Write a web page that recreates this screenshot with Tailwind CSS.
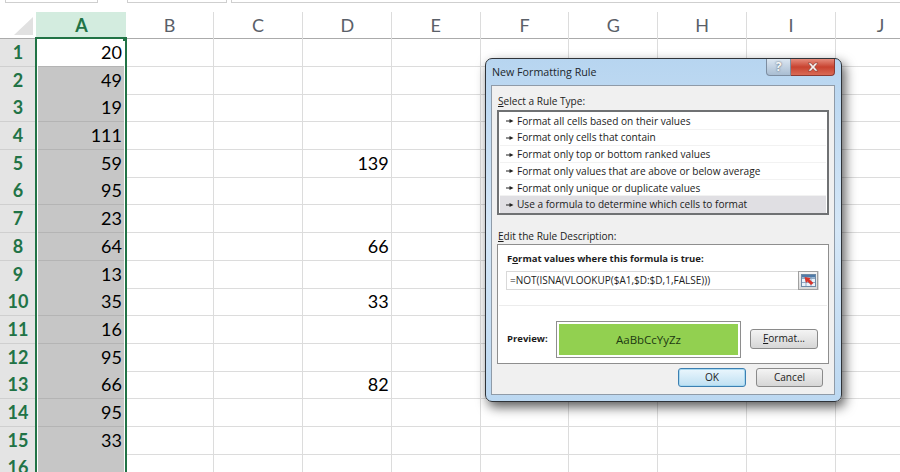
<!DOCTYPE html>
<html lang="en">
<head>
  <meta charset="UTF-8" />
  <title>New Formatting Rule</title>
  <script src="https://cdn.jsdelivr.net/npm/@tailwindcss/browser@4"></script>
</head>
<body class="bg-white overflow-hidden">
<div class="relative w-[900px] h-[472px] overflow-hidden bg-white font-['Lato',sans-serif]">

  <!-- top strip: bottom of the name box / formula bar -->
  <div class="flex h-[12px] items-start pl-[5px]">
    <div class="w-[93px] h-[3px] border-x border-b border-[#cfcfcf]"></div>
    <div class="w-[100px] h-[3px] ml-[29px] border-x border-b border-[#cfcfcf]"></div>
    <div class="flex-1 h-[3px] ml-[4px] border-l border-b border-[#cfcfcf]"></div>
  </div>

  <!-- column headers -->
  <div id="head" class="grid grid-cols-[36px_90px_88px_repeat(7,88.86px)_89px] h-[26px] border-b border-[#ababab] text-[18px] text-[#5a6068] box-content">
    <div class="relative">
      <svg class="absolute left-[14px] top-[5px]" width="20" height="19"><polygon points="19,0 19,18 0,18" fill="#e1e1e1"/></svg>
    </div>
    <div class="flex items-center justify-center pl-[1px] bg-[#d3ecdf] text-[#217346] font-bold">A</div>
    <div class="flex items-center justify-center border-r border-[#dcdcdc]">B</div>
    <div class="flex items-center justify-center border-r border-[#dcdcdc]">C</div>
    <div class="flex items-center justify-center pl-[1px] border-r border-[#dcdcdc]">D</div>
    <div class="flex items-center justify-center border-r border-[#dcdcdc]">E</div>
    <div class="flex items-center justify-center border-r border-[#dcdcdc]">F</div>
    <div class="flex items-center justify-center border-r border-[#dcdcdc]">G</div>
    <div class="flex items-center justify-center border-r border-[#dcdcdc]">H</div>
    <div class="flex items-center justify-center border-r border-[#dcdcdc]">I</div>
    <div class="flex items-center justify-center">J</div>
  </div>

  <!-- rows -->
  <div id="sheet"></div>

  <!-- selection outline on column A -->
  <div class="absolute left-[35px] top-[37px] w-[92px] h-[440px] border-2 border-[#217346]">
    <div class="h-full border-x border-white"></div>
  </div>
  <div class="absolute left-[123px] top-[37px] w-[4px] h-[4px] bg-[#217346]"></div>

  <!-- dialog -->
  <div class="absolute left-[485px] top-[58px] w-[357px] h-[344px] flex flex-col rounded-[7px] border border-[#2f3338] bg-gradient-to-b from-[#b7d5f0] via-[#d5e7f7] to-[#bcd8f1] shadow-[3px_5px_12px_rgba(0,0,0,0.65)] pl-[5px] pr-[6px] pb-[6px] font-['Open_Sans',sans-serif] text-[10.1px] text-[#1c1c1c]">
    <!-- title bar -->
    <div class="relative h-[26px] shrink-0 flex items-center pl-[1px] text-[10.7px] text-[#20262c]">
      New Formatting Rule
      <div class="absolute right-[0px] top-0 flex h-[17px]">
        <div class="w-[25px] flex items-center justify-center rounded-bl-[4px] border border-t-0 border-[#7d8da0] bg-gradient-to-b from-[#dbe6f1] to-[#a9bdd2] text-[#f7f7f7] font-bold text-[12px] [text-shadow:0_0_2px_#3c4a5a]">?</div>
        <div class="w-[44px] flex items-center justify-center rounded-br-[4px] border border-l-0 border-t-0 border-[#8c3a32] bg-gradient-to-b from-[#e58b7c] via-[#c8422f] to-[#d96a55]">
          <svg width="14" height="10" viewBox="0 0 14 10"><path d="M2 1 L5 1 L7 3.4 L9 1 L12 1 L8.6 5 L12 9 L9 9 L7 6.6 L5 9 L2 9 L5.4 5 Z" fill="#f6f1ef" stroke="#6e2a22" stroke-width="0.5"/></svg>
        </div>
      </div>
    </div>

    <!-- body -->
    <div class="flex-1 flex flex-col border border-[#8f9ba8] bg-[#f0f0f0] px-[5px] pt-[8px]">
      <div class="h-[15px] flex items-center pl-[1px] leading-none"><span><span class="underline">S</span>elect a Rule Type:</span></div>
      <div id="rules" class="mt-[1px] h-[105px] border-2 border-[#6f7173] bg-white p-[1px] flex flex-col"></div>

      <div class="mt-[14px] h-[15px] flex items-center pl-[1px] leading-none"><span><span class="underline">E</span>dit the Rule Description:</span></div>
      <div class="h-[120px] border border-[#8e8e8e] bg-white flex flex-col">
        <div class="mt-[7px] pl-[9px] font-bold text-[9.5px] leading-[14px]">F<span class="underline">o</span>rmat values where this formula is true:</div>
        <div class="mt-[5px] ml-[8px] w-[313px] h-[19px] flex items-center border border-[#d9d9d9] pl-[3px] pr-0 text-[10px]">
          <span class="flex-1">=NOT(ISNA(VLOOKUP($A1,$D:$D,1,FALSE)))</span>
          <div class="w-[20px] h-[19px] flex items-center justify-center border border-[#a0a0a0] bg-gradient-to-b from-[#f5f5f5] to-[#d8d8d8]">
            <svg width="15" height="13" viewBox="0 0 15 13">
              <rect x="0.5" y="0.5" width="14" height="12" fill="#eaf2fa" stroke="#6f8aa6"/>
              <path d="M1 4.5H14M1 8.5H14M5 1V12M10 1V12" stroke="#8fa9c4" stroke-width="1"/>
              <rect x="1" y="1" width="13" height="2.5" fill="#4f7ba8"/>
              <path d="M3.5 3 L9.5 4 L8.5 5.5 L12.5 9 L10 11 L6.5 7.5 L5 9 Z" fill="#d8342a"/>
            </svg>
          </div>
        </div>
        <div class="mt-[15px] mx-[1px] border-t border-[#ececec]"></div>
        <div class="mt-[15px] pl-[9px] flex items-start">
          <span class="w-[49px] h-[37px] flex items-center font-bold text-[9.5px]">Preview:</span>
          <div class="w-[185px] h-[37px] border border-[#8e8e8e] p-[2px]">
            <div class="h-full bg-[#92d050] flex items-center justify-center text-[11.5px] text-[#1d3a12]">AaBbCcYyZz</div>
          </div>
          <div class="ml-[9px] mt-[8px] w-[68px] h-[20px] flex items-center justify-center rounded-[3px] border border-[#8a8a8a] bg-gradient-to-b from-[#f4f4f4] to-[#d6d6d6]"><span><span class="underline">F</span>ormat...</span></div>
        </div>
      </div>
      <div class="mt-[4px] flex justify-end gap-[10px] pr-[6px]">
        <div class="w-[68px] h-[19px] flex items-center justify-center rounded-[3px] border border-[#3c7fb1] bg-gradient-to-b from-[#eaf6fd] to-[#bfe0f2] shadow-[inset_0_0_0_1px_#a7d8f0]">OK</div>
        <div class="w-[67px] h-[19px] flex items-center justify-center rounded-[3px] border border-[#8a8a8a] bg-gradient-to-b from-[#f4f4f4] to-[#d6d6d6]">Cancel</div>
      </div>
    </div>
  </div>
</div>

<script>
  // column A values, then the few values in column D
  const colA = [20, 49, 19, 111, 59, 95, 23, 64, 13, 35, 16, 95, 66, 95, 33, ""];
  const colD = { 5: 139, 8: 66, 10: 33, 13: 82 };

  const sheet = document.getElementById("sheet");
  colA.forEach((val, i) => {
    const n = i + 1;
    let cells = "";
    for (let c = 0; c < 8; c++) {
      const text = c === 2 && colD[n] ? colD[n] : "";
      cells += `<div class="border-r border-b border-[#dcdcdc] flex items-center justify-end pr-[2px] text-black">${text}</div>`;
    }
    cells += `<div class="border-b border-[#dcdcdc]"></div>`;
    const fill = n === 1 ? "bg-white" : "bg-[#c6c6c6]";
    sheet.innerHTML += `
      <div class="grid grid-cols-[36px_90px_88px_repeat(7,88.86px)_89px] h-[27.7px] text-[18px]">
        <div class="flex items-center justify-center bg-[#e4e4e4] border-b border-[#cfcfcf] text-[#217346] font-bold text-[18px]">${n}</div>
        <div class="${fill} border-b border-[#b4b4b4] flex items-center justify-end pr-[4px] text-black">${val}</div>
        ${cells}
      </div>`;
  });

  const rules = [
    "Format all cells based on their values",
    "Format only cells that contain",
    "Format only top or bottom ranked values",
    "Format only values that are above or below average",
    "Format only unique or duplicate values",
    "Use a formula to determine which cells to format"
  ];
  const arrow = `<svg class="mr-[3px] shrink-0" width="8" height="6" viewBox="0 0 8 6"><path d="M0 2.4H3.5V1L7.5 3L3.5 5V3.6H0Z" fill="#222"/></svg>`;
  document.getElementById("rules").innerHTML = rules.map((r, i) => {
    const sel = i === rules.length - 1 ? "bg-[#e0dfe3]" : "border-b border-[#f2f2f2]";
    return `<div class="h-[16.7px] flex items-center pl-[6px] pt-[1px] ${sel}">${arrow}<span>${r}</span></div>`;
  }).join("");
</script>
</body>
</html>
